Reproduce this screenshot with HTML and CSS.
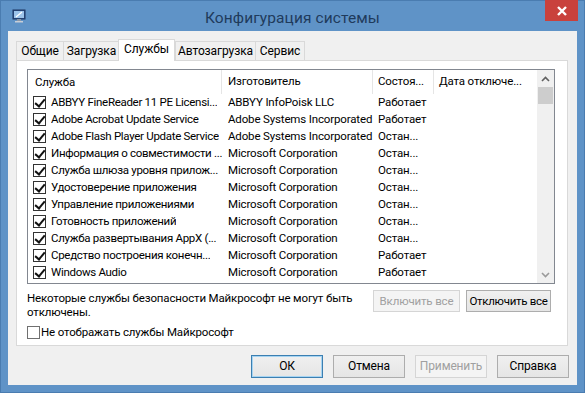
FILE: index.html
```html
<!DOCTYPE html>
<html lang="ru">
<head>
<meta charset="utf-8">
<title>Конфигурация системы</title>
<link rel="stylesheet" href="styles.css">
</head>
<body>
<div class="window">
  <div class="titlebar">
    <svg class="app-icon" width="14" height="14" viewBox="0 0 14 14">
      <rect x="1" y="1" width="12" height="9" fill="#2c4f86" stroke="#1d3560"/>
      <rect x="2" y="2" width="10" height="7" fill="#9cc3ea"/>
      <path d="M4 8 L10 3" stroke="#ffffff" stroke-width="1.2"/>
      <rect x="5" y="10" width="4" height="2" fill="#8a96a6"/>
      <rect x="3" y="12" width="8" height="1.5" fill="#c7ced8"/>
    </svg>
    <div class="title">Конфигурация системы</div>
    <div class="close">
      <svg width="12" height="10" viewBox="0 0 12 10"><path d="M2 1 L10 9 M10 1 L2 9" stroke="#fff" stroke-width="2.4"/></svg>
    </div>
  </div>
  <div class="client">
    <div class="tabs">
      <div class="tab t1">Общие</div>
      <div class="tab t2">Загрузка</div>
      <div class="tab t3 active">Службы</div>
      <div class="tab t4">Автозагрузка</div>
      <div class="tab t5">Сервис</div>
    </div>
    <div class="panel">
      <div class="listbox">
        <div class="list">
          <div class="row header">
            <div class="c1 hc">Служба</div>
            <div class="c2 hc">Изготовитель</div>
            <div class="c3 hc">Состоя...</div>
            <div class="c4 hc">Дата отключе...</div>
          </div>
          <div class="row"><div class="c1"><span class="cb checked"></span><span class="txt">ABBYY FineReader 11 PE Licensi...</span></div><div class="c2">ABBYY InfoPoisk LLC</div><div class="c3">Работает</div><div class="c4"></div></div>
          <div class="row"><div class="c1"><span class="cb checked"></span><span class="txt">Adobe Acrobat Update Service</span></div><div class="c2">Adobe Systems Incorporated</div><div class="c3">Работает</div><div class="c4"></div></div>
          <div class="row"><div class="c1"><span class="cb checked"></span><span class="txt">Adobe Flash Player Update Service</span></div><div class="c2">Adobe Systems Incorporated</div><div class="c3">Остан...</div><div class="c4"></div></div>
          <div class="row"><div class="c1"><span class="cb checked"></span><span class="txt">Информация о совместимости ...</span></div><div class="c2">Microsoft Corporation</div><div class="c3">Остан...</div><div class="c4"></div></div>
          <div class="row"><div class="c1"><span class="cb checked"></span><span class="txt">Служба шлюза уровня прилож...</span></div><div class="c2">Microsoft Corporation</div><div class="c3">Остан...</div><div class="c4"></div></div>
          <div class="row"><div class="c1"><span class="cb checked"></span><span class="txt">Удостоверение приложения</span></div><div class="c2">Microsoft Corporation</div><div class="c3">Остан...</div><div class="c4"></div></div>
          <div class="row"><div class="c1"><span class="cb checked"></span><span class="txt">Управление приложениями</span></div><div class="c2">Microsoft Corporation</div><div class="c3">Остан...</div><div class="c4"></div></div>
          <div class="row"><div class="c1"><span class="cb checked"></span><span class="txt">Готовность приложений</span></div><div class="c2">Microsoft Corporation</div><div class="c3">Остан...</div><div class="c4"></div></div>
          <div class="row"><div class="c1"><span class="cb checked"></span><span class="txt">Служба развертывания AppX (...</span></div><div class="c2">Microsoft Corporation</div><div class="c3">Остан...</div><div class="c4"></div></div>
          <div class="row"><div class="c1"><span class="cb checked"></span><span class="txt">Средство построения конечн...</span></div><div class="c2">Microsoft Corporation</div><div class="c3">Работает</div><div class="c4"></div></div>
          <div class="row"><div class="c1"><span class="cb checked"></span><span class="txt">Windows Audio</span></div><div class="c2">Microsoft Corporation</div><div class="c3">Работает</div><div class="c4"></div></div>
        </div>
        <div class="scrollbar">
          <div class="arrow">
            <svg width="9" height="6" viewBox="0 0 9 6"><path d="M1 5 L4.5 1.5 L8 5" fill="none" stroke="#606060" stroke-width="1.6"/></svg>
          </div>
          <div class="thumb"></div>
          <div class="track"></div>
          <div class="arrow">
            <svg width="9" height="6" viewBox="0 0 9 6"><path d="M1 1 L4.5 4.5 L8 1" fill="none" stroke="#9a9a9a" stroke-width="1.6"/></svg>
          </div>
        </div>
      </div>
      <div class="below">
        <div class="note">Некоторые службы безопасности Майкрософт не могут быть отключены.</div>
        <div class="btn disabled mid">Включить все</div>
        <div class="btn mid second">Отключить все</div>
      </div>
      <label class="hide-ms"><span class="cb"></span>Не отображать службы Майкрософт</label>
    </div>
    <div class="buttons">
      <div class="btn big default">ОК</div>
      <div class="btn big">Отмена</div>
      <div class="btn big disabled">Применить</div>
      <div class="btn big">Справка</div>
    </div>
  </div>
</div>
</body>
</html>
```
FILE: styles.css
```css
* { box-sizing: border-box; }
html, body { margin: 0; padding: 0; }
body {
  width: 585px;
  height: 393px;
  overflow: hidden;
  background: #5f93c7;
  font-family: Roboto, "Noto Sans", sans-serif;
  font-size: 11.5px;
  letter-spacing: -0.15px;
  color: #000;
}
.window {
  width: 585px;
  height: 393px;
  display: flex;
  flex-direction: column;
  background: #5f93c7;
  border: 1px solid #4a7cb0;
}
.titlebar {
  position: relative;
  height: 30px;
  flex: none;
}
.app-icon { position: absolute; left: 11px; top: 8px; }
.title {
  text-align: center;
  font-size: 15.5px;
  letter-spacing: 0.1px;
  line-height: 30px;
  color: #1f3b5c;
  padding-top: 2px;
}
.close {
  position: absolute;
  right: 6px;
  top: -1px;
  width: 33px;
  height: 21px;
  background: #c9413c;
  display: flex;
  align-items: center;
  justify-content: center;
}
.client {
  flex: 1;
  margin: 0 7px 7px 7px;
  background: #f0f0f0;
  display: flex;
  flex-direction: column;
  padding: 8px 8px 0 8px;
}
.tabs {
  display: flex;
  align-items: flex-end;
  height: 21px;
  position: relative;
  z-index: 1;
  font-size: 12px;
  letter-spacing: -0.1px;
}
.tab {
  height: 19px;
  border: 1px solid #d9d9d9;
  border-bottom: none;
  background: #f0f0f0;
  line-height: 18px;
  margin-right: -1px;
  text-align: center;
  white-space: nowrap;
}
.t1 { width: 48px; }
.t2 { width: 57px; }
.t3 { width: 57px; }
.t4 { width: 81px; }
.t5 { width: 50px; }
.tab.active {
  height: 22px;
  background: #ffffff;
  margin: 0 0 0 -1px;
  line-height: 19px;
  position: relative;
  top: 1px;
}
.panel {
  background: #fff;
  border: 1px solid #d9d9d9;
  height: 286px;
  margin-right: 1px;
  padding: 8px 12px 0 10px;
  display: flex;
  flex-direction: column;
}
.listbox {
  display: flex;
  border: 1px solid #828790;
  height: 215px;
}
.list { flex: 1; min-width: 0; }
.row {
  display: flex;
  height: 17px;
  line-height: 17px;
  white-space: nowrap;
}
.row > div { overflow: hidden; flex: none; }
.row.header {
  height: 24px;
  line-height: 23px;
}
.hc { border-right: 1px solid #e5e5e5; }
.c1 { width: 194px; padding-left: 5px; display: flex; align-items: center; letter-spacing: -0.3px; }
.header .c1 { padding-left: 7px; letter-spacing: -0.15px; }
.c2 { width: 151px; padding-left: 6px; }
.c3 { width: 61px; padding-left: 5px; }
.c4 { width: 102px; padding-left: 5px; }
.header .c4 { border-right: none; }
.txt { overflow: hidden; }
.cb {
  width: 13px;
  height: 13px;
  border: 1px solid #333;
  background: #fff;
  margin-right: 5px;
  flex: none;
  display: inline-block;
  position: relative;
}
.cb.checked::after {
  content: "";
  position: absolute;
  left: 3px;
  top: 0px;
  width: 4px;
  height: 8px;
  border-right: 2px solid #111;
  border-bottom: 2px solid #111;
  transform: rotate(40deg);
}
.scrollbar {
  width: 17px;
  flex: none;
  background: #f0f0f0;
  display: flex;
  flex-direction: column;
}
.arrow {
  height: 17px;
  display: flex;
  align-items: center;
  justify-content: center;
}
.thumb {
  height: 17px;
  background: #cdcdcd;
  margin: 0 1px;
}
.track { flex: 1; }
.below {
  display: flex;
  align-items: flex-start;
  margin-top: 6px;
}
.note {
  width: 345px;
  line-height: 14px;
  margin-top: 1px;
  margin-right: 1px;
}
.btn {
  border: 1px solid #adadad;
  background: linear-gradient(#f0f0f0, #e5e5e5);
  text-align: center;
  height: 22px;
  line-height: 20px;
  white-space: nowrap;
}
.btn.mid { width: 87px; }
.btn.mid.second { margin-left: 6px; width: 85px; letter-spacing: -0.3px; }
.btn.disabled {
  color: #a0a0a0;
  border-color: #d5d5d5;
  background: #f4f4f4;
}
.hide-ms {
  display: flex;
  align-items: center;
  margin-top: 5px;
  height: 16px;
}
.hide-ms .cb { border-color: #707070; margin-right: 1px; }
.buttons {
  display: flex;
  justify-content: flex-end;
  gap: 10px;
  padding-top: 9px;
  font-size: 12px;
}
.btn.big { width: 72px; height: 23px; line-height: 21px; }
.btn.default { border-color: #3c7fb1; box-shadow: inset 0 0 0 1px #a6d4f2; }
```
